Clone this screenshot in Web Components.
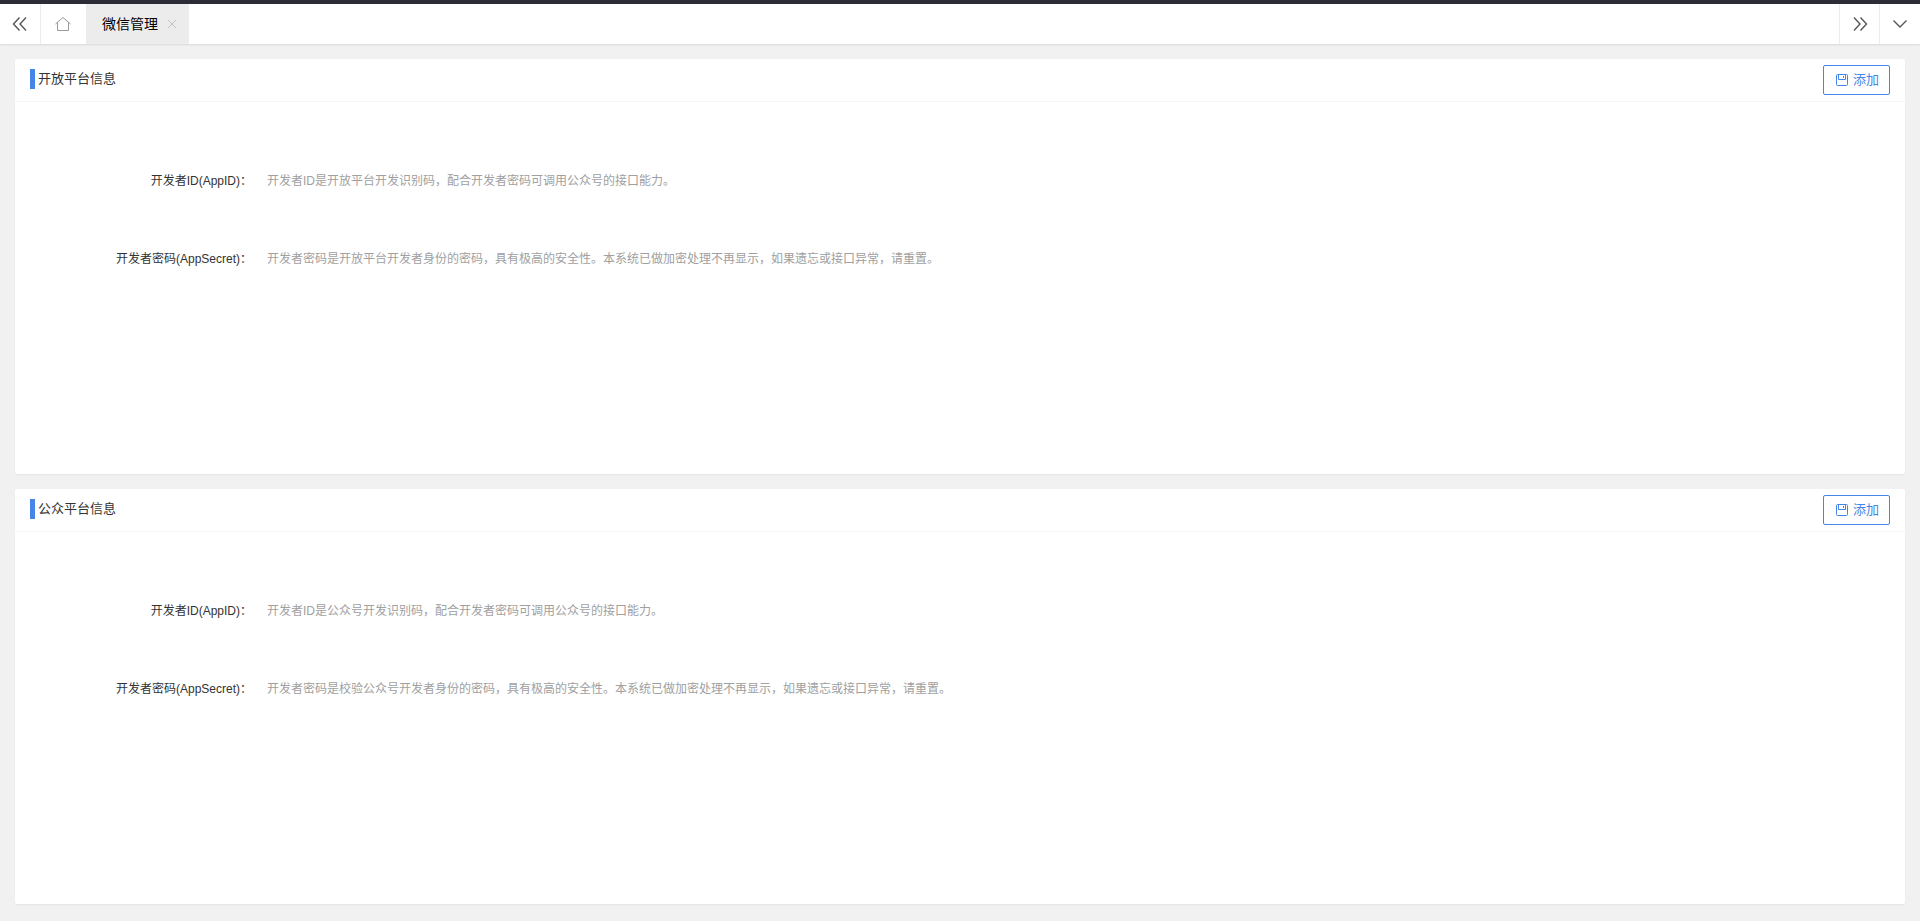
<!DOCTYPE html>
<html lang="zh-CN">
<head>
<meta charset="utf-8">
<meta name="viewport" content="width=device-width, initial-scale=1">
<title>微信管理</title>
<style>
  body {
    margin: 0;
    min-height: 100vh;
    display: flex;
    flex-direction: column;
    background: #f1f1f1;
    color: #333;
    font: 12px/20px "Liberation Sans", "Noto Sans CJK SC", sans-serif;
  }
  main {
    flex: 1;
    display: grid;
    grid-auto-rows: 1fr;
    gap: 15px;
    padding: 15px 15px 17px;
  }
</style>
</head>
<body>
  <page-tabs>
    <page-tab>微信管理</page-tab>
  </page-tabs>

  <main>
    <info-card>
      <span slot="title">开放平台信息</span>
      <info-row label="开发者ID(AppID)：">开发者ID是开放平台开发识别码，配合开发者密码可调用公众号的接口能力。</info-row>
      <info-row label="开发者密码(AppSecret)：">开发者密码是开放平台开发者身份的密码，具有极高的安全性。本系统已做加密处理不再显示，如果遗忘或接口异常，请重置。</info-row>
    </info-card>
    <info-card>
      <span slot="title">公众平台信息</span>
      <info-row label="开发者ID(AppID)：">开发者ID是公众号开发识别码，配合开发者密码可调用公众号的接口能力。</info-row>
      <info-row label="开发者密码(AppSecret)：">开发者密码是校验公众号开发者身份的密码，具有极高的安全性。本系统已做加密处理不再显示，如果遗忘或接口异常，请重置。</info-row>
    </info-card>
  </main>

<script>
// icons, all drawn as strokes
const icons = {
  prev: '<path d="M7.5 1.5 1.5 8l6 6.5M14 1.5 8 8l6 6.5"/>',
  next: '<path d="M2 1.5 8 8l-6 6.5M8.5 1.5l6 6.5-6 6.5"/>',
  down: '<path d="M1.5 4.5 8 11l6.5-6.5"/>',
  home: '<path d="M.5 8 8 1.500 15.500 8M2.500 6.500v8h11v-8"/>',
  close: '<path d="M4 4l8 8M12 4l-8 8"/>',
  save: '<path d="M3.500 2.500h9q1 0 1 1v9q0 1-1 1h-9q-1 0-1-1v-9q0-1 1-1zM4.500 2.500v5h7v-5M9.500 4v2"/>'
};

class UiIcon extends HTMLElement {
  constructor() {
    super();
    this.attachShadow({ mode: 'open' });
  }

  connectedCallback() {
    this.shadowRoot.innerHTML = `
      <style>
        :host { display: block; width: 16px; height: 16px; }
        svg { display: block; width: 100%; height: 100%; fill: none; stroke: currentColor; stroke-width: var(--icon-stroke, 1); }
      </style>
      <svg viewBox="0 0 16 16" aria-hidden="true">${icons[this.getAttribute('name')]}</svg>
    `;
  }
}

class PageTab extends HTMLElement {
  constructor() {
    super();
    this.attachShadow({ mode: 'open' });
    this.shadowRoot.innerHTML = `
      <style>
        :host {
          display: flex;
          align-items: center;
          gap: 6px;
          padding: 0 9px 0 16px;
          background: #ececec;
          color: #000;
          font-size: 14px;
        }
        a { color: inherit; text-decoration: none; }
        button { padding: 0; border: 0; background: none; color: #c2c2c2; cursor: pointer; }
      </style>
      <a href="#"><slot></slot></a>
      <button type="button" aria-label="关闭"><ui-icon name="close"></ui-icon></button>
    `;
    this.shadowRoot.querySelector('button').addEventListener('click', () => this.remove());
  }
}

class PageTabs extends HTMLElement {
  constructor() {
    super();
    this.attachShadow({ mode: 'open' });
    this.shadowRoot.innerHTML = `
      <style>
        :host {
          display: block;
          border-top: 4px solid #2b2c35;
          background: #fff;
          box-shadow: 0 1px 2px rgba(0, 0, 0, .1);
        }
        nav { display: flex; height: 40px; }
        button, .home {
          box-sizing: border-box;
          display: flex;
          align-items: center;
          justify-content: center;
          width: 41px;
          padding: 0;
          border: 0;
          background: none;
          color: #555;
          cursor: pointer;
        }
        button { --icon-stroke: 1.4; }
        .prev { border-right: 1px solid #ececec; }
        .next, .more { border-left: 1px solid #ececec; }
        .next { width: 40px; margin-left: auto; }
        .home { width: 45px; padding-right: 1px; color: #999; }
      </style>
      <nav>
        <button class="prev" type="button" aria-label="向左"><ui-icon name="prev"></ui-icon></button>
        <a class="home" href="#" aria-label="首页"><ui-icon name="home"></ui-icon></a>
        <slot></slot>
        <button class="next" type="button" aria-label="向右"><ui-icon name="next"></ui-icon></button>
        <button class="more" type="button" aria-label="更多"><ui-icon name="down"></ui-icon></button>
      </nav>
    `;
  }
}

class InfoCard extends HTMLElement {
  constructor() {
    super();
    this.attachShadow({ mode: 'open' });
    this.shadowRoot.innerHTML = `
      <style>
        :host {
          display: block;
          border-radius: 2px;
          background: #fff;
          box-shadow: 0 1px 2px rgba(0, 0, 0, .05);
        }
        header {
          display: flex;
          align-items: center;
          justify-content: space-between;
          height: 42px;
          padding: 0 15px;
          border-bottom: 1px solid #f6f6f6;
        }
        h2 {
          display: flex;
          align-items: center;
          gap: 3px;
          margin: 0 0 3px;
          font-size: 13px;
          font-weight: normal;
          line-height: 21px;
        }
        h2::before {
          content: "";
          width: 5px;
          height: 20px;
          background: #4685e8;
        }
        button {
          box-sizing: border-box;
          display: flex;
          align-items: center;
          gap: 3px;
          height: 30px;
          padding: 0 10px;
          border: 1px solid #4685e8;
          border-radius: 2px;
          background: #fff;
          color: #4685e8;
          font: inherit;
          font-size: 13px;
          cursor: pointer;
        }
        .body { display: grid; gap: 58px; padding: 69px 0 40px; }
      </style>
      <header>
        <h2><slot name="title"></slot></h2>
        <button type="button"><ui-icon name="save"></ui-icon>添加</button>
      </header>
      <div class="body"><slot></slot></div>
    `;
  }
}

class InfoRow extends HTMLElement {
  constructor() {
    super();
    this.attachShadow({ mode: 'open' });
  }

  connectedCallback() {
    this.shadowRoot.innerHTML = `
      <style>
        :host { display: flex; gap: 15px; line-height: 20px; }
        .label { flex: none; width: 237px; text-align: right; }
        .text { color: #a0a0a0; }
      </style>
      <span class="label">${this.getAttribute('label')}</span>
      <span class="text"><slot></slot></span>
    `;
  }
}

window.customElements.define('ui-icon', UiIcon);
window.customElements.define('page-tab', PageTab);
window.customElements.define('page-tabs', PageTabs);
window.customElements.define('info-card', InfoCard);
window.customElements.define('info-row', InfoRow);
</script>
</body>
</html>
